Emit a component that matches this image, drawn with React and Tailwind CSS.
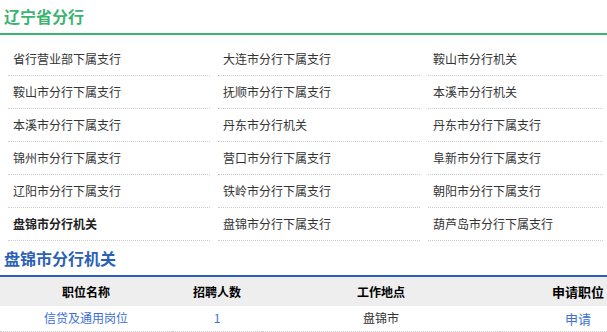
const branches = [
  ['省行营业部下属支行', '大连市分行下属支行', '鞍山市分行机关'],
  ['鞍山市分行下属支行', '抚顺市分行下属支行', '本溪市分行机关'],
  ['本溪市分行下属支行', '丹东市分行机关', '丹东市分行下属支行'],
  ['锦州市分行下属支行', '营口市分行下属支行', '阜新市分行下属支行'],
  ['辽阳市分行下属支行', '铁岭市分行下属支行', '朝阳市分行下属支行'],
  ['盘锦市分行机关', '盘锦市分行下属支行', '葫芦岛市分行下属支行'],
];

const font = { fontFamily: '"Microsoft YaHei", "Noto Sans CJK SC", sans-serif' };

export default function App() {
  return (
    <div className="w-[607px] h-[332px] overflow-hidden bg-white text-[12px] text-[#333]" style={font}>
      {/* Province header */}
      <div className="h-[35px] border-b-2 border-[#3cb371] px-[4px] pt-[5px]">
        <h2 className="text-[16px] leading-[22px] font-bold text-[#3cb371]">辽宁省分行</h2>
      </div>

      {/* Branch list */}
      <div className="grid grid-cols-[210px_210px_1fr] pl-[4px] pt-[8px]">
        {branches.flat().map((name, i) => (
          <div key={i} className="mx-[4px] h-[33px] border-b border-dotted border-[#ccc] pl-[5px] flex items-center">
            <span className={name === '盘锦市分行机关' ? 'font-bold text-[#222]' : ''}>{name}</span>
          </div>
        ))}
      </div>

      {/* Selected branch */}
      <div className="h-[36px] border-b-2 border-[#2b5fb8] px-[4px] pt-[6px]">
        <h2 className="text-[16px] leading-[22px] font-bold text-[#2b5fb8]">盘锦市分行机关</h2>
      </div>

      <table className="w-full border-collapse">
        <thead>
          <tr className="bg-[#eeeeee] h-[29px] font-bold text-black">
            <th className="w-[172px] text-center">职位名称</th>
            <th className="w-[90px] text-center">招聘人数</th>
            <th className="w-[238px] text-center">工作地点</th>
            <th className="text-center pl-[49px] text-[13px]">申请职位</th>
          </tr>
        </thead>
        <tbody>
          <tr className="h-[25px] border-b border-dotted border-[#ccc]">
            <td className="text-center text-[#3a6fd8]">信贷及通用岗位</td>
            <td className="text-center text-[#3a6fd8]">1</td>
            <td className="text-center">盘锦市</td>
            <td className="text-center pl-[49px] text-[13px] text-[#3a6fd8]">申请</td>
          </tr>
        </tbody>
      </table>
    </div>
  );
}
